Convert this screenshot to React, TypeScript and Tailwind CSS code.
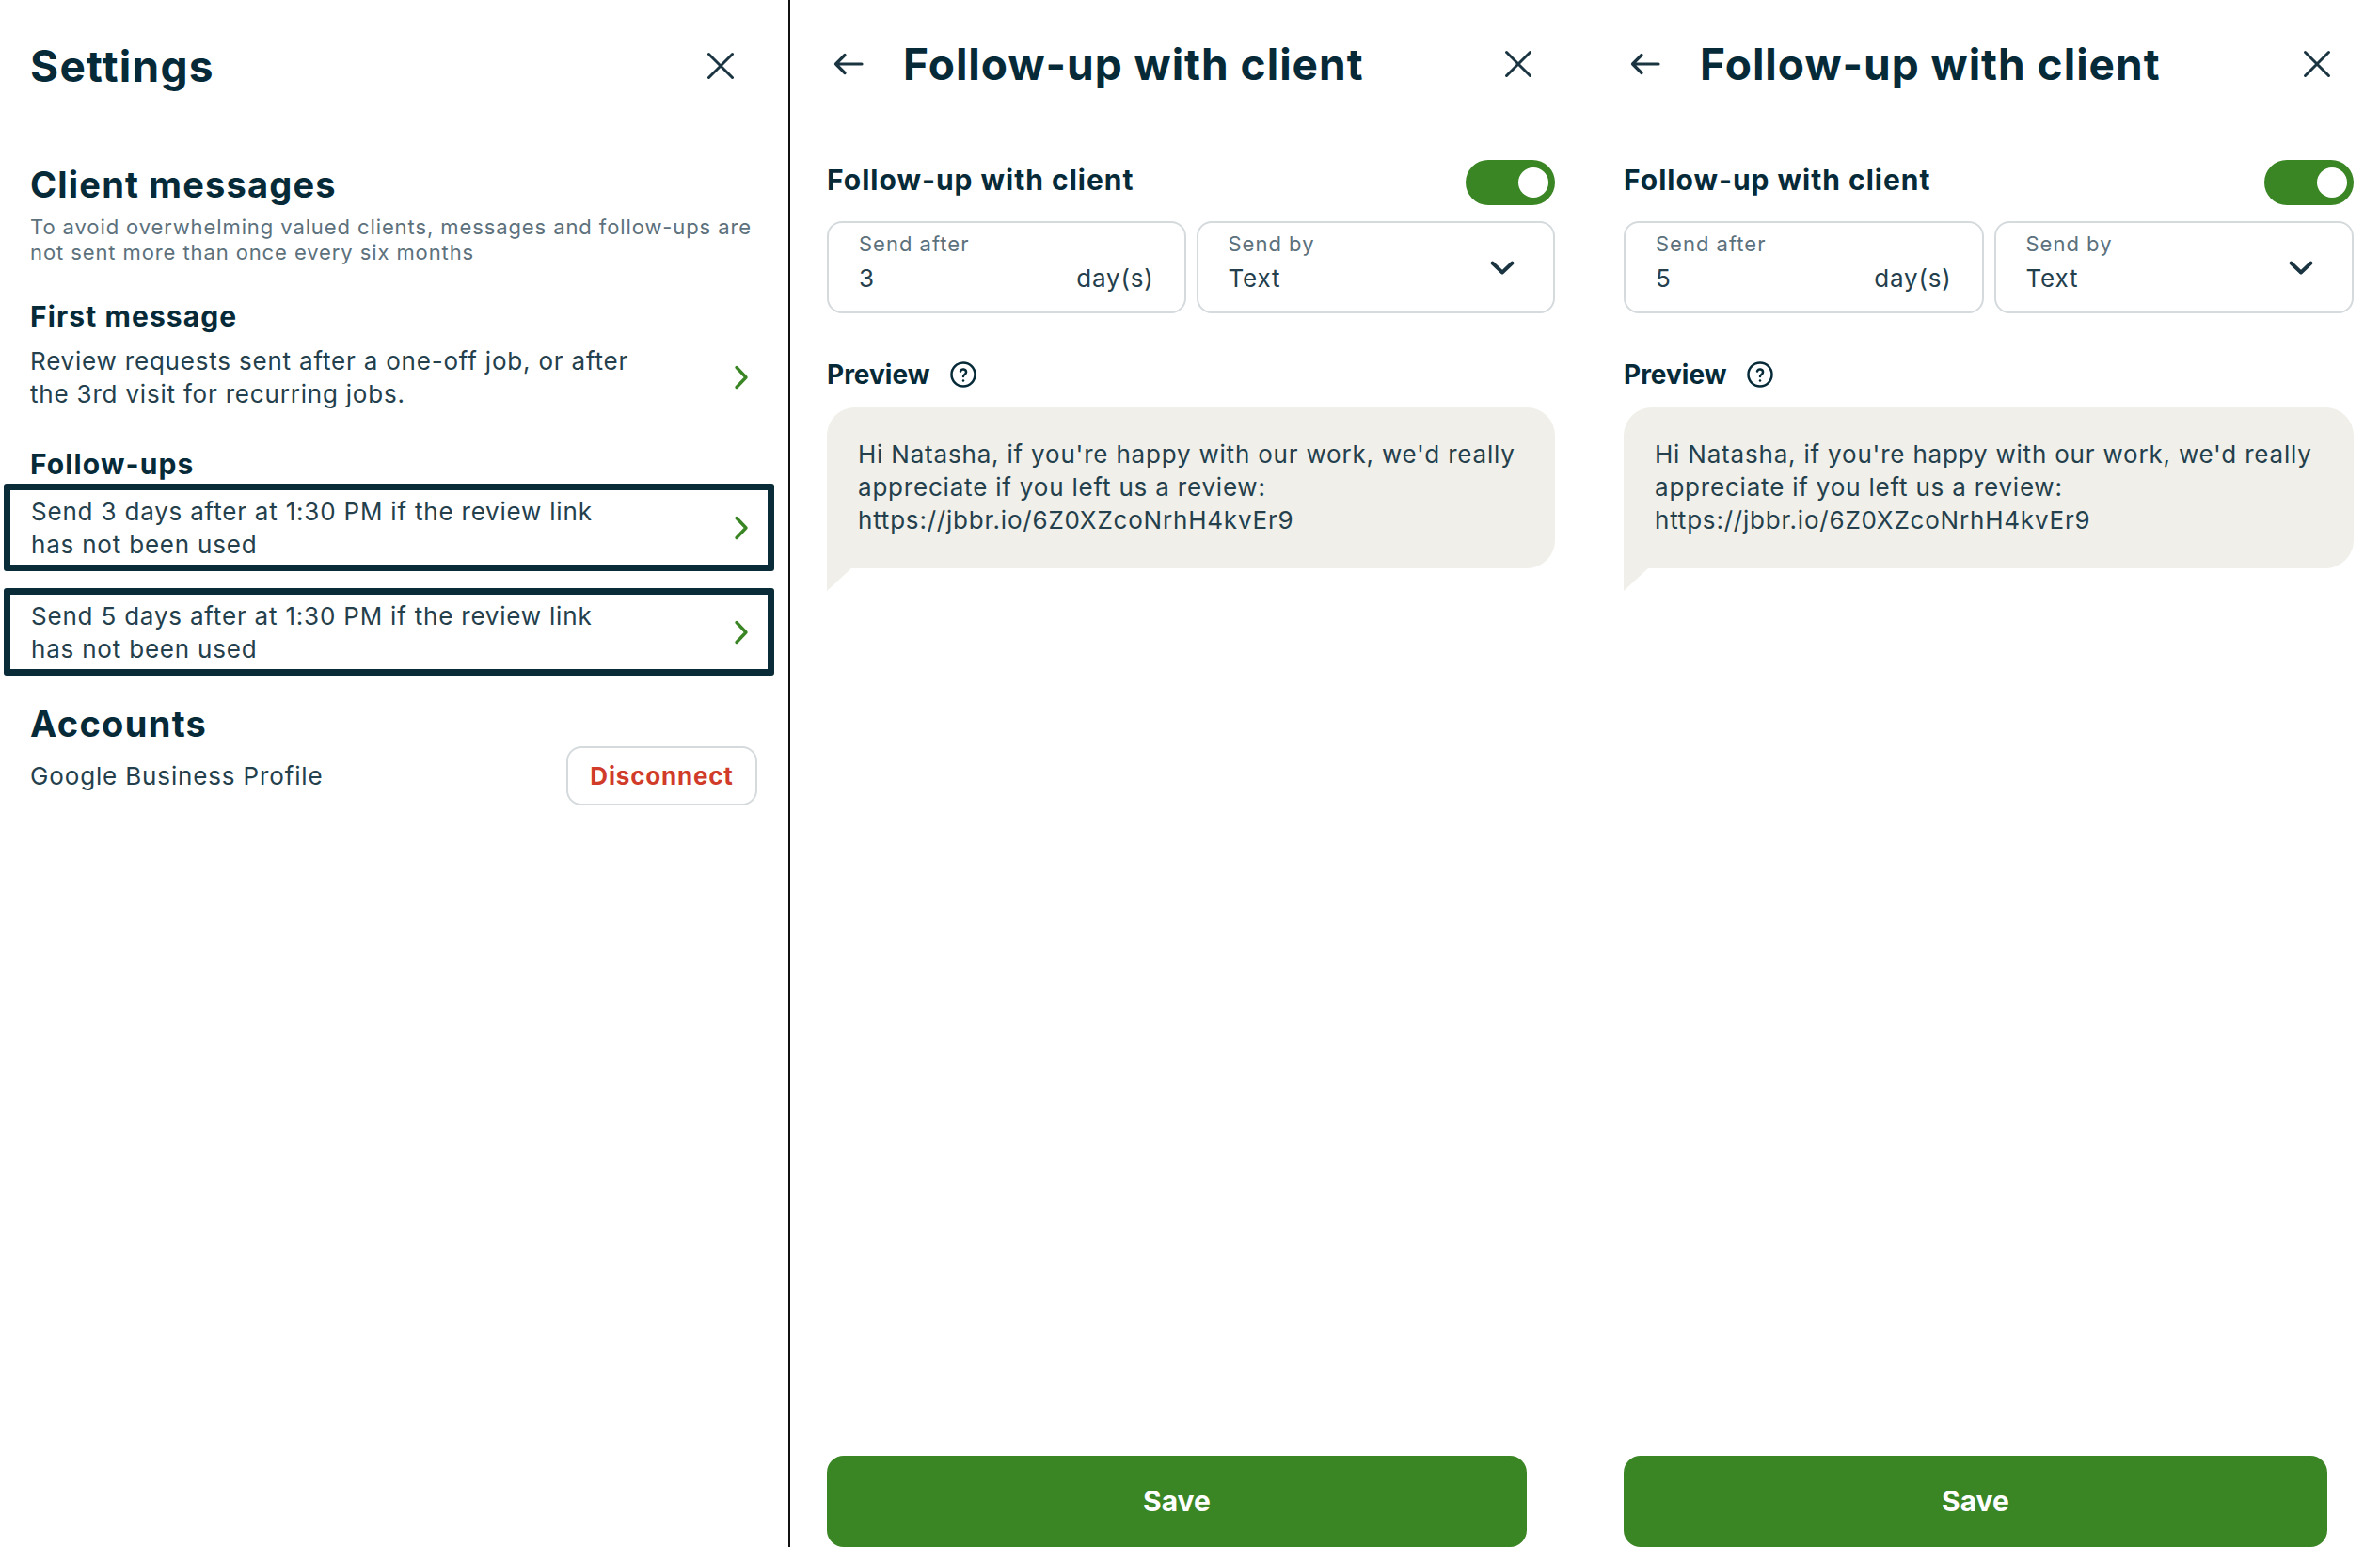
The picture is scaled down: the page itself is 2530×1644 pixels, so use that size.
import React from "react"

function CloseIcon({ className = "" }: { className?: string }) {
  return (
    <svg className={className} width="30" height="30" viewBox="0 0 30 30" fill="none" stroke="#1b3441" strokeWidth="3" strokeLinecap="round">
      <path d="M2.5 2.5 27.5 27.5 M27.5 2.5 2.5 27.5" />
    </svg>
  )
}

function BackArrow({ className = "" }: { className?: string }) {
  return (
    <svg className={className} width="32" height="24" viewBox="0 0 32 24" fill="none" stroke="#1b3441" strokeWidth="3.2" strokeLinecap="round" strokeLinejoin="round">
      <path d="M30 12H2.5M12 2.5 2.5 12 12 21.5" />
    </svg>
  )
}

function ChevronRight({ className = "" }: { className?: string }) {
  return (
    <svg className={className} width="16" height="26" viewBox="0 0 16 26" fill="none" stroke="#3a8524" strokeWidth="3.4" strokeLinecap="round" strokeLinejoin="round">
      <path d="M3 2.5 13 13 3 23.5" />
    </svg>
  )
}

function ChevronDown({ className = "" }: { className?: string }) {
  return (
    <svg className={className} width="26" height="15" viewBox="0 0 26 15" fill="none" stroke="#1b3441" strokeWidth="3.8" strokeLinecap="round" strokeLinejoin="round">
      <path d="M2.5 2.5 13 12.5 23.5 2.5" />
    </svg>
  )
}

function HelpIcon() {
  return (
    <svg width="30" height="30" viewBox="0 0 24 24" fill="none" stroke="#062a38" strokeWidth="2" strokeLinecap="round" strokeLinejoin="round">
      <circle cx="12" cy="12" r="10" />
      <path d="M9.6 9.2a2.5 2.5 0 0 1 4.85.8c0 1.7-2.45 2.4-2.45 3.6" />
      <path d="M12 17.2h.01" />
    </svg>
  )
}

function Toggle() {
  return (
    <div className="flex h-[48px] w-[95px] items-center justify-end rounded-full bg-[#3a8524] pr-[7px]">
      <div className="h-[32px] w-[32px] rounded-full bg-white" />
    </div>
  )
}

function FollowUpRow({ text }: { text: string }) {
  return (
    <div className="-ml-[28px] -mr-[18px] flex h-[93px] items-center justify-between rounded-[3px] border-[7px] border-[#0a2b38] pl-[22px] pr-[20px]">
      <p className="w-[625px] text-[26px] leading-[35px] tracking-[0.8px] text-[#24404c]">{text}</p>
      <ChevronRight />
    </div>
  )
}

function SettingsPanel() {
  return (
    <div className="w-[838px] shrink-0 pl-[32px] pr-[33px] text-[#062a38]">
      <div className="flex h-[140px] items-center justify-between">
        <h1 className="text-[46px] leading-none font-bold tracking-[1.3px]">Settings</h1>
        <button className="mr-[24px]">
          <CloseIcon />
        </button>
      </div>

      <h2 className="mt-[34px] text-[38px] leading-[44px] font-bold tracking-[1.2px]">Client messages</h2>
      <p className="mt-[10px] text-[22px] leading-[27px] tracking-[0.9px] text-[#5c717c]">
        To avoid overwhelming valued clients, messages and follow-ups are not sent more than once every six months
      </p>

      <h3 className="mt-[35px] text-[30px] leading-[38px] font-bold tracking-[1.1px]">First message</h3>
      <div className="mt-[11px] flex items-center justify-between">
        <p className="w-[665px] text-[26px] leading-[35px] tracking-[0.8px] text-[#24404c]">
          Review requests sent after a one-off job, or after the 3rd visit for recurring jobs.
        </p>
        <ChevronRight className="mr-[9px]" />
      </div>

      <h3 className="mt-[38px] text-[30px] leading-[38px] font-bold tracking-[1.1px]">Follow-ups</h3>
      <div className="mt-[2px] flex flex-col gap-[18px]">
        <FollowUpRow text="Send 3 days after at 1:30 PM if the review link has not been used" />
        <FollowUpRow text="Send 5 days after at 1:30 PM if the review link has not been used" />
      </div>

      <h2 className="mt-[29px] text-[38px] leading-[44px] font-bold tracking-[1.3px]">Accounts</h2>
      <div className="mt-[2px] flex h-[63px] items-center justify-between">
        <span className="text-[26px] tracking-[0.85px] text-[#24404c]">Google Business Profile</span>
        <button className="h-[63px] w-[203px] rounded-[16px] border-2 border-[#d5dadd] text-[26px] font-bold tracking-[0.8px] text-[#d13b2a]">
          Disconnect
        </button>
      </div>
    </div>
  )
}

function FollowUpPanel({ days, className, saveWidth }: { days: string; className: string; saveWidth: string }) {
  return (
    <div className={`flex h-full shrink-0 flex-col text-[#062a38] ${className}`}>
      <div className="flex h-[136px] items-center">
        <BackArrow className="ml-[7px]" />
        <h1 className="ml-[42px] text-[46px] leading-none font-bold tracking-[1px]">Follow-up with client</h1>
        <CloseIcon className="ml-auto mr-[24px]" />
      </div>

      <div className="mt-[34px] flex h-[48px] items-center justify-between">
        <h2 className="pb-[6px] text-[30px] leading-none font-bold tracking-[1px]">Follow-up with client</h2>
        <Toggle />
      </div>

      <div className="mt-[17px] grid grid-cols-2 gap-[11px]">
        <div className="h-[98px] rounded-[16px] border-2 border-[#d5dadd] px-[32px] pt-[8px]">
          <div className="text-[22px] leading-[28px] tracking-[1px] text-[#5c717c]">Send after</div>
          <div className="mt-[6px] flex justify-between text-[26px] leading-[34px] tracking-[0.8px] text-[#24404c]">
            <span>{days}</span>
            <span>day(s)</span>
          </div>
        </div>
        <div className="flex h-[98px] items-center justify-between rounded-[16px] border-2 border-[#d5dadd] pl-[32px] pr-[41px]">
          <div className="self-start pt-[8px]">
            <div className="text-[22px] leading-[28px] tracking-[1px] text-[#5c717c]">Send by</div>
            <div className="mt-[6px] text-[26px] leading-[34px] tracking-[0.8px] text-[#24404c]">Text</div>
          </div>
          <ChevronDown />
        </div>
      </div>

      <div className="mt-[47px] flex h-[36px] items-center gap-[20px]">
        <span className="text-[28px] leading-none font-bold">Preview</span>
        <HelpIcon />
      </div>

      <div className="mt-[17px]">
        <div className="rounded-[30px] rounded-bl-none bg-[#f0efe9] px-[33px] pt-[32px] pb-[34px] text-[26px] leading-[35px] tracking-[0.8px] text-[#24404c]">
          Hi Natasha, if you're happy with our work, we'd really appreciate if you left us a review: https://jbbr.io/6Z0XZcoNrhH4kvEr9
        </div>
        <svg className="block" width="26" height="24" viewBox="0 0 26 24">
          <path d="M0 0H26L0 24Z" fill="#f0efe9" />
        </svg>
      </div>

      <button className={`mt-auto h-[97px] ${saveWidth} rounded-[18px] bg-[#3a8524] text-[30px] font-bold text-white`}>
        Save
      </button>
    </div>
  )
}

export default function App() {
  return (
    <div className="flex h-[1644px] w-[2530px] overflow-hidden bg-white font-['Inter',sans-serif]">
      <SettingsPanel />
      <div className="w-[2px] shrink-0 bg-[#111]" />
      <FollowUpPanel days="3" className="w-[848px] pl-[39px] pr-[35px]" saveWidth="w-[744px]" />
      <div className="w-[842px] shrink-0 overflow-hidden">
        <FollowUpPanel days="5" className="w-[852px] pl-[38px] pr-[38px]" saveWidth="w-[748px]" />
      </div>
    </div>
  )
}
